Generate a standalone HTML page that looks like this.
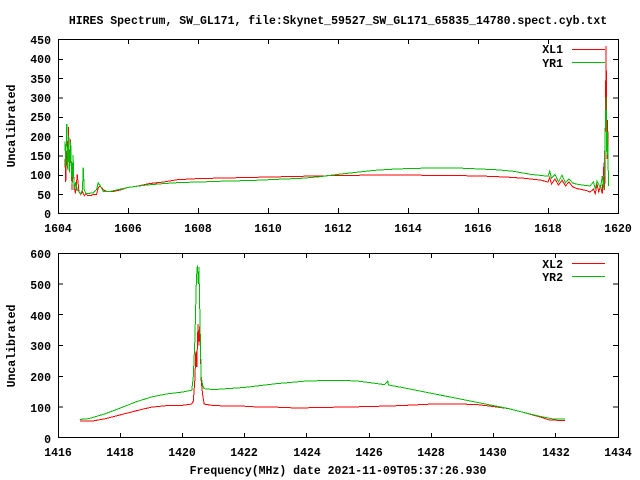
<!DOCTYPE html>
<html><head><style>
html,body{margin:0;padding:0;background:#fff;width:640px;height:480px;overflow:hidden}
svg text{font-family:"Liberation Mono",monospace;font-weight:bold;font-size:11.5px;fill:#000}
</style></head><body>
<svg width="640" height="480" xmlns="http://www.w3.org/2000/svg">
<text x="338" y="24" text-anchor="middle">HIRES Spectrum, SW_GL171, file:Skynet_59527_SW_GL171_65835_14780.spect.cyb.txt</text>

<!-- top plot -->
<g stroke="#000" stroke-width="1" fill="none" shape-rendering="crispEdges">
<rect x="58.5" y="39.5" width="560" height="174"/>
<path d="M58,194.7h5M58,175.3h5M58,156h5M58,136.7h5M58,117.3h5M58,98h5M58,78.7h5M58,59.3h5
M618,194.7h-5M618,175.3h-5M618,156h-5M618,136.7h-5M618,117.3h-5M618,98h-5M618,78.7h-5M618,59.3h-5
M128.5,213v-5M198.5,213v-5M268.5,213v-5M338.5,213v-5M408.5,213v-5M478.5,213v-5M548.5,213v-5
M128.5,39v5M198.5,39v5M268.5,39v5M338.5,39v5M408.5,39v5M478.5,39v5M548.5,39v5"/>
</g>
<g text-anchor="end">
<text x="51" y="218">0</text><text x="51" y="199">50</text><text x="51" y="179">100</text><text x="51" y="160">150</text><text x="51" y="141">200</text><text x="51" y="121">250</text><text x="51" y="102">300</text><text x="51" y="83">350</text><text x="51" y="63">400</text><text x="51" y="44">450</text>
</g>
<g text-anchor="middle">
<text x="58" y="232">1604</text><text x="128" y="232">1606</text><text x="198" y="232">1608</text><text x="268" y="232">1610</text><text x="338" y="232">1612</text><text x="408" y="232">1614</text><text x="478" y="232">1616</text><text x="548" y="232">1618</text><text x="618" y="232">1620</text>
</g>
<text transform="translate(15,126) rotate(-90)" text-anchor="middle">Uncalibrated</text>
<text x="563" y="53" text-anchor="end">XL1</text>
<text x="563" y="67" text-anchor="end">YR1</text>
<path d="M572,49.5h33" stroke="#f00" shape-rendering="crispEdges"/>
<path d="M572,62.5h33" stroke="#0b0" shape-rendering="crispEdges"/>

<g transform="translate(58,213) scale(35,-0.38667) translate(-1604,0)" fill="none" stroke-width="1" shape-rendering="crispEdges">
<polyline vector-effect="non-scaling-stroke" stroke="#f00" points="1604.2,140 1604.22,80 1604.25,160 1604.28,120 1604.3,222 1604.33,110 1604.36,190 1604.4,60 1604.43,140 1604.46,70 1604.5,50 1604.55,100 1604.6,55 1604.65,48 1604.7,55 1604.75,45 1604.8,50 1604.85,45 1604.95,45 1605,48 1605.1,48 1605.15,65 1605.2,70 1605.3,60 1605.4,55 1605.6,56 1605.8,60 1606,66 1606.3,70 1606.6,76 1607,80 1607.4,86 1608,89 1608.5,90 1609,91 1609.5,92 1610,93 1611,95 1612,97 1613,98 1614,98 1615,97 1616,96 1616.8,93 1617.3,90 1617.8,85 1618,80 1618.05,92 1618.1,75 1618.2,88 1618.3,72 1618.4,85 1618.5,70 1618.6,80 1618.7,68 1618.8,64 1619,60 1619.1,58 1619.2,54 1619.3,62 1619.35,50 1619.4,75 1619.45,55 1619.5,70 1619.55,50 1619.6,130 1619.62,60 1619.64,250 1619.66,432 1619.68,140 1619.7,240 1619.72,160"/>
<polyline vector-effect="non-scaling-stroke" stroke="#0b0" points="1604.2,185 1604.22,120 1604.25,230 1604.28,110 1604.3,200 1604.33,105 1604.36,185 1604.4,75 1604.43,150 1604.46,60 1604.5,80 1604.55,60 1604.6,55 1604.65,50 1604.7,60 1604.72,118 1604.75,60 1604.8,50 1605,52 1605.1,60 1605.15,78 1605.2,72 1605.3,55 1605.5,56 1605.7,60 1606,66 1606.5,72 1607,76 1607.5,79 1608,80 1608.6,82 1609,83 1609.5,84 1610,86 1610.5,88 1611,90 1611.5,94 1612,100 1612.5,105 1613,110 1613.5,113 1614,115 1614.5,116 1615.5,116 1616,114 1616.5,112 1617,108 1617.5,100 1618,95 1618.05,108 1618.1,90 1618.2,100 1618.3,80 1618.4,98 1618.5,78 1618.6,88 1618.7,78 1618.8,75 1619,72 1619.2,70 1619.3,80 1619.35,62 1619.4,82 1619.5,65 1619.55,95 1619.6,60 1619.63,200 1619.66,300 1619.68,150 1619.7,210 1619.73,70"/>
</g>

<!-- bottom plot -->
<g stroke="#000" stroke-width="1" fill="none" shape-rendering="crispEdges">
<rect x="58.5" y="253.5" width="560" height="184"/>
<path d="M58,407.2h5M58,376.3h5M58,345.5h5M58,314.7h5M58,283.8h5
M618,407.2h-5M618,376.3h-5M618,345.5h-5M618,314.7h-5M618,283.8h-5
M120.5,438v-5M182.5,438v-5M244.5,438v-5M306.5,438v-5M369.5,438v-5M431.5,438v-5M493.5,438v-5M555.5,438v-5
M120.5,253v5M182.5,253v5M244.5,253v5M306.5,253v5M369.5,253v5M431.5,253v5M493.5,253v5M555.5,253v5"/>
</g>
<g text-anchor="end">
<text x="51" y="443">0</text><text x="51" y="412">100</text><text x="51" y="381">200</text><text x="51" y="350">300</text><text x="51" y="320">400</text><text x="51" y="289">500</text><text x="51" y="258">600</text>
</g>
<g text-anchor="middle">
<text x="58" y="456">1416</text><text x="120" y="456">1418</text><text x="182" y="456">1420</text><text x="244" y="456">1422</text><text x="307" y="456">1424</text><text x="369" y="456">1426</text><text x="431" y="456">1428</text><text x="493" y="456">1430</text><text x="556" y="456">1432</text><text x="618" y="456">1434</text>
</g>
<text transform="translate(15,346) rotate(-90)" text-anchor="middle">Uncalibrated</text>
<text x="338" y="474" text-anchor="middle">Frequency(MHz) date 2021-11-09T05:37:26.930</text>
<text x="563" y="268" text-anchor="end">XL2</text>
<text x="563" y="281" text-anchor="end">YR2</text>
<path d="M572,263.5h33" stroke="#f00" shape-rendering="crispEdges"/>
<path d="M572,276.5h33" stroke="#0b0" shape-rendering="crispEdges"/>

<g transform="translate(58,438) scale(31.111,-0.30833) translate(-1416,0)" fill="none" shape-rendering="crispEdges">
<polyline vector-effect="non-scaling-stroke" stroke="#f00" points="1416.7,55 1417.1,55 1417.5,62 1418,75 1418.5,88 1419,100 1419.5,105 1420,106 1420.3,110 1420.35,120 1420.4,190 1420.43,280 1420.46,230 1420.5,370 1420.53,300 1420.56,370 1420.6,190 1420.65,140 1420.7,110 1421,105 1422,103 1422.5,100 1423,100 1423.5,98 1424,98 1425,100 1426,102 1427,105 1428,110 1429,110 1429.5,108 1430,102 1430.5,95 1431,82 1431.5,68 1431.8,58 1432.3,57"/>
<polyline vector-effect="non-scaling-stroke" stroke="#0b0" points="1416.7,60 1417,63 1417.5,78 1418,97 1418.5,117 1419,133 1419.5,143 1420,149 1420.3,155 1420.35,200 1420.4,320 1420.45,520 1420.48,560 1420.51,500 1420.53,555 1420.57,350 1420.6,200 1420.65,170 1420.7,160 1421,157 1422,164 1423,176 1424,185 1425,187 1425.6,185 1426,180 1426.5,173 1426.6,185 1426.62,172 1427,165 1428,145 1429,125 1430,105 1430.5,95 1431,82 1431.5,70 1431.9,62 1432.3,62"/>
</g>
</svg>
</body></html>
